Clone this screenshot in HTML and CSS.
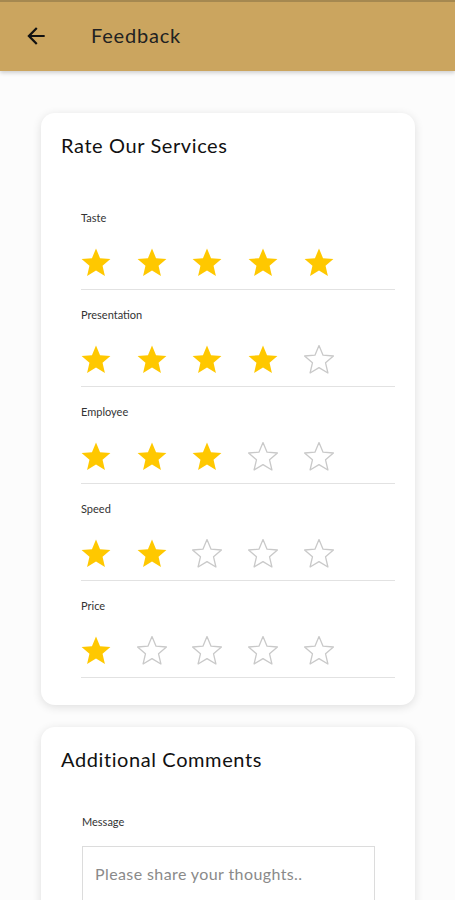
FILE: index.html
```html
<!DOCTYPE html>
<html>
<head>
<meta charset="utf-8">
<link rel="stylesheet" href="styles.css">
</head>
<body>
<header class="appbar">
  <svg class="back" viewBox="0 0 24 24" width="26" height="26"><path d="M20 11H7.83l5.59-5.59L12 4l-8 8 8 8 1.41-1.41L7.83 13H20v-2z" fill="#111"/></svg>
  <h1 class="appbar-title">Feedback</h1>
</header>
<main class="content">
  <section class="card card-ratings">
    <h2 class="card-title">Rate Our Services</h2>
    <div class="ratings">
      <div class="rating-row"><div class="rating-label">Taste</div><div class="stars" data-n="5"></div></div>
      <div class="rating-row"><div class="rating-label">Presentation</div><div class="stars" data-n="4"></div></div>
      <div class="rating-row"><div class="rating-label">Employee</div><div class="stars" data-n="3"></div></div>
      <div class="rating-row"><div class="rating-label">Speed</div><div class="stars" data-n="2"></div></div>
      <div class="rating-row"><div class="rating-label">Price</div><div class="stars" data-n="1"></div></div>
    </div>
  </section>
  <section class="card">
    <h2 class="card-title">Additional Comments</h2>
    <div class="field">
      <div class="field-label">Message</div>
      <textarea class="message" placeholder="Please share your thoughts.."></textarea>
    </div>
  </section>
</main>
<script src="app.js"></script>
</body>
</html>
```
FILE: app.js
```js
var P = "M12 17.27L18.18 21l-1.64-7.03L22 9.24l-7.19-.61L12 2 9.19 8.63 2 9.24l5.46 4.73L5.82 21z";
document.querySelectorAll('.stars').forEach(function (el) {
  var n = parseInt(el.getAttribute('data-n'), 10);
  var html = '';
  for (var i = 0; i < 5; i++) {
    var on = i < n;
    html += '<svg class="star ' + (on ? 'on' : 'off') + '" viewBox="1.6 1.6 20.8 20.8" width="30" height="30"><path d="' + P + '"/></svg>';
  }
  el.innerHTML = html;
});
```
FILE: styles.css
```css
* { box-sizing: border-box; }
html, body { margin: 0; padding: 0; }
body {
  background: #fcfcfc;
  font-family: Lato, "Noto Sans", sans-serif;
  color: #111;
  width: 455px;
  height: 900px;
  overflow: hidden;
}
.appbar {
  height: 71px;
  background: #cba55f;
  border-top: 2px solid #a58850;
  display: flex;
  align-items: center;
  padding-left: 23px;
  padding-bottom: 4px;
  box-shadow: 0 2px 4px rgba(0,0,0,0.18);
  position: relative;
  z-index: 1;
}
.back { display: block; margin-top: 2px; }
.appbar-title {
  margin: 0 0 0 42px;
  font-size: 20px;
  font-weight: 400;
  color: #222;
  letter-spacing: 0.8px;
}
.content {
  padding: 42px 40px 0 41px;
  display: flex;
  flex-direction: column;
  gap: 22px;
}
.card {
  background: #fff;
  border-radius: 14px;
  box-shadow: 0 2px 10px rgba(0,0,0,0.12);
  padding: 20px 20px 25px 20px;
}
.card-ratings { padding-bottom: 27px; }
.card-title {
  margin: 0;
  font-size: 20px;
  line-height: 24px;
  font-weight: 400;
  color: #111;
  letter-spacing: 0.6px;
}
.ratings {
  padding-left: 20px;
  margin-top: 54px;
}
.rating-row {
  border-bottom: 1px solid #e2e2e2;
  padding-bottom: 11px;
}
.rating-row + .rating-row { margin-top: 18px; }
.rating-label {
  font-size: 11px;
  line-height: 14px;
  color: #333;
}
.stars {
  margin-top: 23px;
  display: flex;
  gap: 25.7px;
  height: 30px;
}
.star { display: block; }
.star.on path { fill: #ffc800; }
.star.off path { fill: none; stroke: #c9c9c9; stroke-width: 0.9; stroke-linejoin: round; }
.field {
  padding-left: 21px;
  margin-top: 44px;
}
.field-label {
  font-size: 11px;
  line-height: 14px;
  color: #333;
}
.message {
  display: block;
  margin-top: 17px;
  width: 293px;
  height: 120px;
  border: 1.5px solid #dcdcdc;
  border-radius: 0;
  padding: 17px 12px 14px;
  font-family: Lato, "Noto Sans", sans-serif;
  font-size: 16px;
  letter-spacing: 0.4px;
  resize: none;
  outline: none;
}
.message::placeholder { color: #8a8a8a; }
```
